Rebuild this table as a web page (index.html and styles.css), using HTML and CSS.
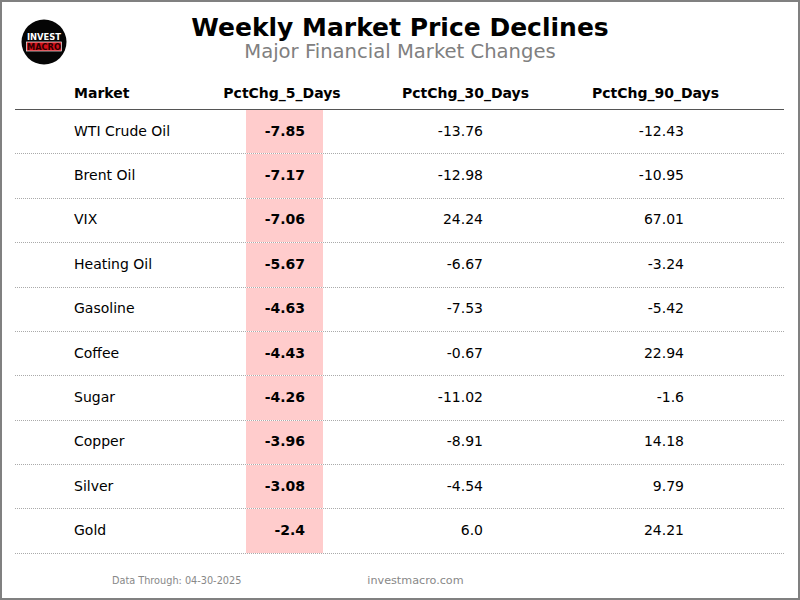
FILE: index.html
```html
<!DOCTYPE html>
<html>
<head>
<meta charset="utf-8">
<link rel="stylesheet" href="styles.css">
</head>
<body>
<div class="page">
  <header class="head">
    <svg class="logo" width="46" height="46" viewBox="0 0 46 46">
      <circle cx="23" cy="23" r="22.5" fill="#050505"/>
      <text x="23" y="20.5" text-anchor="middle" class="logo-t1">INVEST</text>
      <rect x="5.5" y="23" width="35" height="9" fill="#d4101a" stroke="#f2f2f2" stroke-width="0.7"/>
      <text x="23" y="30.6" text-anchor="middle" class="logo-t2">MACRO</text>
    </svg>
    <h1 class="title">Weekly Market Price Declines</h1>
    <p class="subtitle">Major Financial Market Changes</p>
  </header>
  <div class="table">
    <div class="row hrow">
      <div class="c1">Market</div>
      <div class="c2 h2">PctChg_5_Days</div>
      <div class="c3 h3">PctChg_30_Days</div>
      <div class="c4 h4">PctChg_90_Days</div>
    </div>
    <div class="row"><div class="c1">WTI Crude Oil</div><div class="c2">-7.85</div><div class="c3">-13.76</div><div class="c4">-12.43</div></div>
    <div class="row"><div class="c1">Brent Oil</div><div class="c2">-7.17</div><div class="c3">-12.98</div><div class="c4">-10.95</div></div>
    <div class="row"><div class="c1">VIX</div><div class="c2">-7.06</div><div class="c3">24.24</div><div class="c4">67.01</div></div>
    <div class="row"><div class="c1">Heating Oil</div><div class="c2">-5.67</div><div class="c3">-6.67</div><div class="c4">-3.24</div></div>
    <div class="row"><div class="c1">Gasoline</div><div class="c2">-4.63</div><div class="c3">-7.53</div><div class="c4">-5.42</div></div>
    <div class="row"><div class="c1">Coffee</div><div class="c2">-4.43</div><div class="c3">-0.67</div><div class="c4">22.94</div></div>
    <div class="row"><div class="c1">Sugar</div><div class="c2">-4.26</div><div class="c3">-11.02</div><div class="c4">-1.6</div></div>
    <div class="row"><div class="c1">Copper</div><div class="c2">-3.96</div><div class="c3">-8.91</div><div class="c4">14.18</div></div>
    <div class="row"><div class="c1">Silver</div><div class="c2">-3.08</div><div class="c3">-4.54</div><div class="c4">9.79</div></div>
    <div class="row"><div class="c1">Gold</div><div class="c2">-2.4</div><div class="c3">6.0</div><div class="c4">24.21</div></div>
  </div>
  <footer class="foot">
    <span class="date">Data Through: 04-30-2025</span>
    <span class="site">investmacro.com</span>
  </footer>
</div>
</body>
</html>
```
FILE: styles.css
```css
html, body {
  margin: 0;
  padding: 0;
  background: #fff;
}
.page {
  width: 800px;
  height: 600px;
  box-sizing: border-box;
  border: 2px solid #808080;
  font-family: "DejaVu Sans", sans-serif;
  color: #000;
  overflow: hidden;
}
.head {
  position: relative;
  text-align: center;
  padding-top: 12px;
}
.logo {
  position: absolute;
  left: 19px;
  top: 17px;
}
.logo-t1 {
  font-family: "DejaVu Sans", sans-serif;
  font-weight: bold;
  font-size: 8.4px;
  fill: #fff;
}
.logo-t2 {
  font-family: "DejaVu Sans", sans-serif;
  font-weight: bold;
  font-size: 8.2px;
  fill: #2a0000;
}
.title {
  margin: 0;
  font-size: 25px;
  line-height: 28px;
  font-weight: bold;
}
.subtitle {
  margin: -1px 0 0;
  font-size: 19.6px;
  line-height: 22px;
  color: #808080;
}
.table {
  margin: 14px 14px 0 13px;
}
.row {
  display: grid;
  grid-template-columns: 231px 77px 237px 224px;
  height: 44.38px;
  box-sizing: border-box;
  border-bottom: 1px dotted #aaa;
  align-items: center;
  font-size: 14px;
}
.row > div {
  height: 100%;
  box-sizing: border-box;
  padding-bottom: 2px;
  display: flex;
  align-items: center;
  white-space: nowrap;
}
.hrow {
  height: 33px;
  border-bottom: 1px solid #555;
  font-weight: bold;
}
.hrow > div {
  padding-bottom: 0;
}
.c1 {
  padding-left: 59px;
}
.c2 {
  background: #ffcccc;
  font-weight: bold;
  justify-content: flex-end;
  padding-right: 18px;
}
.c3 {
  justify-content: flex-end;
  padding-right: 77px;
}
.c4 {
  justify-content: flex-end;
  padding-right: 100px;
}
.hrow .c2 {
  background: transparent;
  justify-content: center;
  padding-right: 5px;
}
.hrow .h3 {
  padding-right: 31px;
}
.hrow .h4 {
  padding-right: 65px;
}
.foot {
  display: flex;
  align-items: center;
  padding: 20px 0 0 110px;
  color: #888;
}
.date {
  font-size: 10.8px;
  font-stretch: condensed;
  font-family: "DejaVu Sans Condensed", "DejaVu Sans", sans-serif;
}
.site {
  margin-left: 126px;
  font-size: 11.2px;
}
```
